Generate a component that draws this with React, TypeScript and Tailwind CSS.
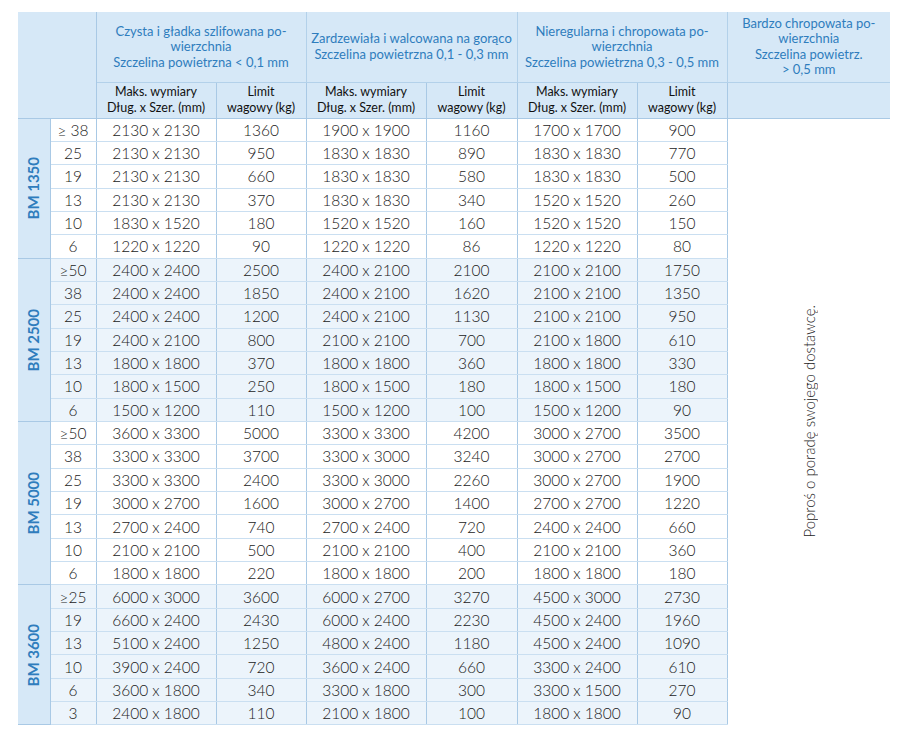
import React from "react";

type Row = [string, string, string, string, string, string, string];
type Group = { name: string; tint: boolean; rows: Row[] };

const groups: Group[] = [
  {
    name: "BM 1350",
    tint: false,
    rows: [
      ["≥ 38", "2130 x 2130", "1360", "1900 x 1900", "1160", "1700 x 1700", "900"],
      ["25", "2130 x 2130", "950", "1830 x 1830", "890", "1830 x 1830", "770"],
      ["19", "2130 x 2130", "660", "1830 x 1830", "580", "1830 x 1830", "500"],
      ["13", "2130 x 2130", "370", "1830 x 1830", "340", "1520 x 1520", "260"],
      ["10", "1830 x 1520", "180", "1520 x 1520", "160", "1520 x 1520", "150"],
      ["6", "1220 x 1220", "90", "1220 x 1220", "86", "1220 x 1220", "80"],
    ],
  },
  {
    name: "BM 2500",
    tint: true,
    rows: [
      ["≥50", "2400 x 2400", "2500", "2400 x 2100", "2100", "2100 x 2100", "1750"],
      ["38", "2400 x 2400", "1850", "2400 x 2100", "1620", "2100 x 2100", "1350"],
      ["25", "2400 x 2400", "1200", "2400 x 2100", "1130", "2100 x 2100", "950"],
      ["19", "2400 x 2100", "800", "2100 x 2100", "700", "2100 x 1800", "610"],
      ["13", "1800 x 1800", "370", "1800 x 1800", "360", "1800 x 1800", "330"],
      ["10", "1800 x 1500", "250", "1800 x 1500", "180", "1800 x 1500", "180"],
      ["6", "1500 x 1200", "110", "1500 x 1200", "100", "1500 x 1200", "90"],
    ],
  },
  {
    name: "BM 5000",
    tint: false,
    rows: [
      ["≥50", "3600 x 3300", "5000", "3300 x 3300", "4200", "3000 x 2700", "3500"],
      ["38", "3300 x 3300", "3700", "3300 x 3000", "3240", "3000 x 2700", "2700"],
      ["25", "3300 x 3300", "2400", "3300 x 3000", "2260", "3000 x 2700", "1900"],
      ["19", "3000 x 2700", "1600", "3000 x 2700", "1400", "2700 x 2700", "1220"],
      ["13", "2700 x 2400", "740", "2700 x 2400", "720", "2400 x 2400", "660"],
      ["10", "2100 x 2100", "500", "2100 x 2100", "400", "2100 x 2100", "360"],
      ["6", "1800 x 1800", "220", "1800 x 1800", "200", "1800 x 1800", "180"],
    ],
  },
  {
    name: "BM 3600",
    tint: true,
    rows: [
      ["≥25", "6000 x 3000", "3600", "6000 x 2700", "3270", "4500 x 3000", "2730"],
      ["19", "6600 x 2400", "2430", "6000 x 2400", "2230", "4500 x 2400", "1960"],
      ["13", "5100 x 2400", "1250", "4800 x 2400", "1180", "4500 x 2400", "1090"],
      ["10", "3900 x 2400", "720", "3600 x 2400", "660", "3300 x 2400", "610"],
      ["6", "3600 x 1800", "340", "3300 x 1800", "300", "3300 x 1500", "270"],
      ["3", "2400 x 1800", "110", "2100 x 1800", "100", "1800 x 1800", "90"],
    ],
  },
];

const totalRows = groups.reduce((n, g) => n + g.rows.length, 0);

function GroupHead({ lines, last }: { lines: string[]; last?: boolean }) {
  return (
    <th
      colSpan={last ? 1 : 2}
      className="border-r border-b border-[#b3d1ea] px-1 align-middle text-center text-[13px] font-normal leading-[15.5px] text-[#2f7dbd]"
    >
      {lines.map((l, i) => (
        <div key={i}>{l}</div>
      ))}
    </th>
  );
}

function SubHead({ a, b }: { a: string; b: string }) {
  return (
    <th className="border-r border-b border-[#a9c9e5] px-0.5 align-middle text-center text-[12.5px] font-normal leading-[16px] text-[#111]">
      <div>{a}</div>
      <div>{b}</div>
    </th>
  );
}

export default function App() {
  return (
    <div className="min-h-[749px] w-[917px] bg-white pl-[18px] pt-[12px] font-['Lato','Open_Sans',sans-serif]">
      <table className="w-[872px] table-fixed border-collapse">
        <colgroup>
          <col className="w-[32px]" />
          <col className="w-[46px]" />
          <col className="w-[120px]" />
          <col className="w-[90px]" />
          <col className="w-[120px]" />
          <col className="w-[91px]" />
          <col className="w-[120px]" />
          <col className="w-[90px]" />
          <col className="w-[163px]" />
        </colgroup>
        <thead className="bg-[#d6e8f7]">
          <tr className="h-[70px]">
            <th rowSpan={2} colSpan={2} className="border-r border-b border-[#a9c9e5]" />
            <GroupHead lines={["Czysta i gładka szlifowana po-", "wierzchnia", "Szczelina powietrzna < 0,1 mm"]} />
            <GroupHead lines={["Zardzewiała i walcowana na gorąco", "Szczelina powietrzna 0,1 - 0,3 mm"]} />
            <GroupHead lines={["Nieregularna i chropowata po-", "wierzchnia", "Szczelina powietrzna 0,3 - 0,5 mm"]} />
            <th className="border-b border-[#b3d1ea] px-1 align-middle text-center text-[13px] font-normal leading-[15.5px] text-[#2f7dbd]">
              <div>Bardzo chropowata po-</div>
              <div>wierzchnia</div>
              <div>Szczelina powietrz.</div>
              <div>&gt; 0,5 mm</div>
            </th>
          </tr>
          <tr className="h-[36px]">
            <SubHead a="Maks. wymiary" b="Dług. x Szer. (mm)" />
            <SubHead a="Limit" b="wagowy (kg)" />
            <SubHead a="Maks. wymiary" b="Dług. x Szer. (mm)" />
            <SubHead a="Limit" b="wagowy (kg)" />
            <SubHead a="Maks. wymiary" b="Dług. x Szer. (mm)" />
            <SubHead a="Limit" b="wagowy (kg)" />
            <th className="border-b border-[#a9c9e5]" />
          </tr>
        </thead>
        <tbody>
          {groups.map((g, gi) =>
            g.rows.map((r, ri) => (
              <tr
                key={`${gi}-${ri}`}
                className={`h-[23.35px] text-[15.5px] leading-[22px] text-[#1a1a1a] ${g.tint ? "bg-[#ecf4fb]" : "bg-white"}`}
              >
                {ri === 0 && (
                  <td
                    rowSpan={g.rows.length}
                    className="border-r border-b border-[#a9c9e5] bg-[#d6e8f7] p-0 align-middle"
                  >
                    <div className="flex items-center justify-center">
                      <span className="rotate-180 whitespace-nowrap text-[15px] font-bold leading-none text-[#2f7dbd] [writing-mode:vertical-rl]">
                        {g.name}
                      </span>
                    </div>
                  </td>
                )}
                {r.map((c, ci) => (
                  <td
                    key={ci}
                    className="border-r border-b border-r-[#a9c9e5] border-b-[#cadff1] p-0 text-center align-middle font-light whitespace-nowrap"
                  >
                    {c}
                  </td>
                ))}
                {gi === 0 && ri === 0 && (
                  <td rowSpan={totalRows} className="bg-white p-0 align-middle">
                    <div className="flex items-center justify-center pl-[1px]">
                      <span className="rotate-180 whitespace-nowrap text-[15px] font-light leading-none text-[#222] [writing-mode:vertical-rl]">
                        Poproś o poradę swojego dostawcę.
                      </span>
                    </div>
                  </td>
                )}
              </tr>
            ))
          )}
        </tbody>
      </table>
    </div>
  );
}
